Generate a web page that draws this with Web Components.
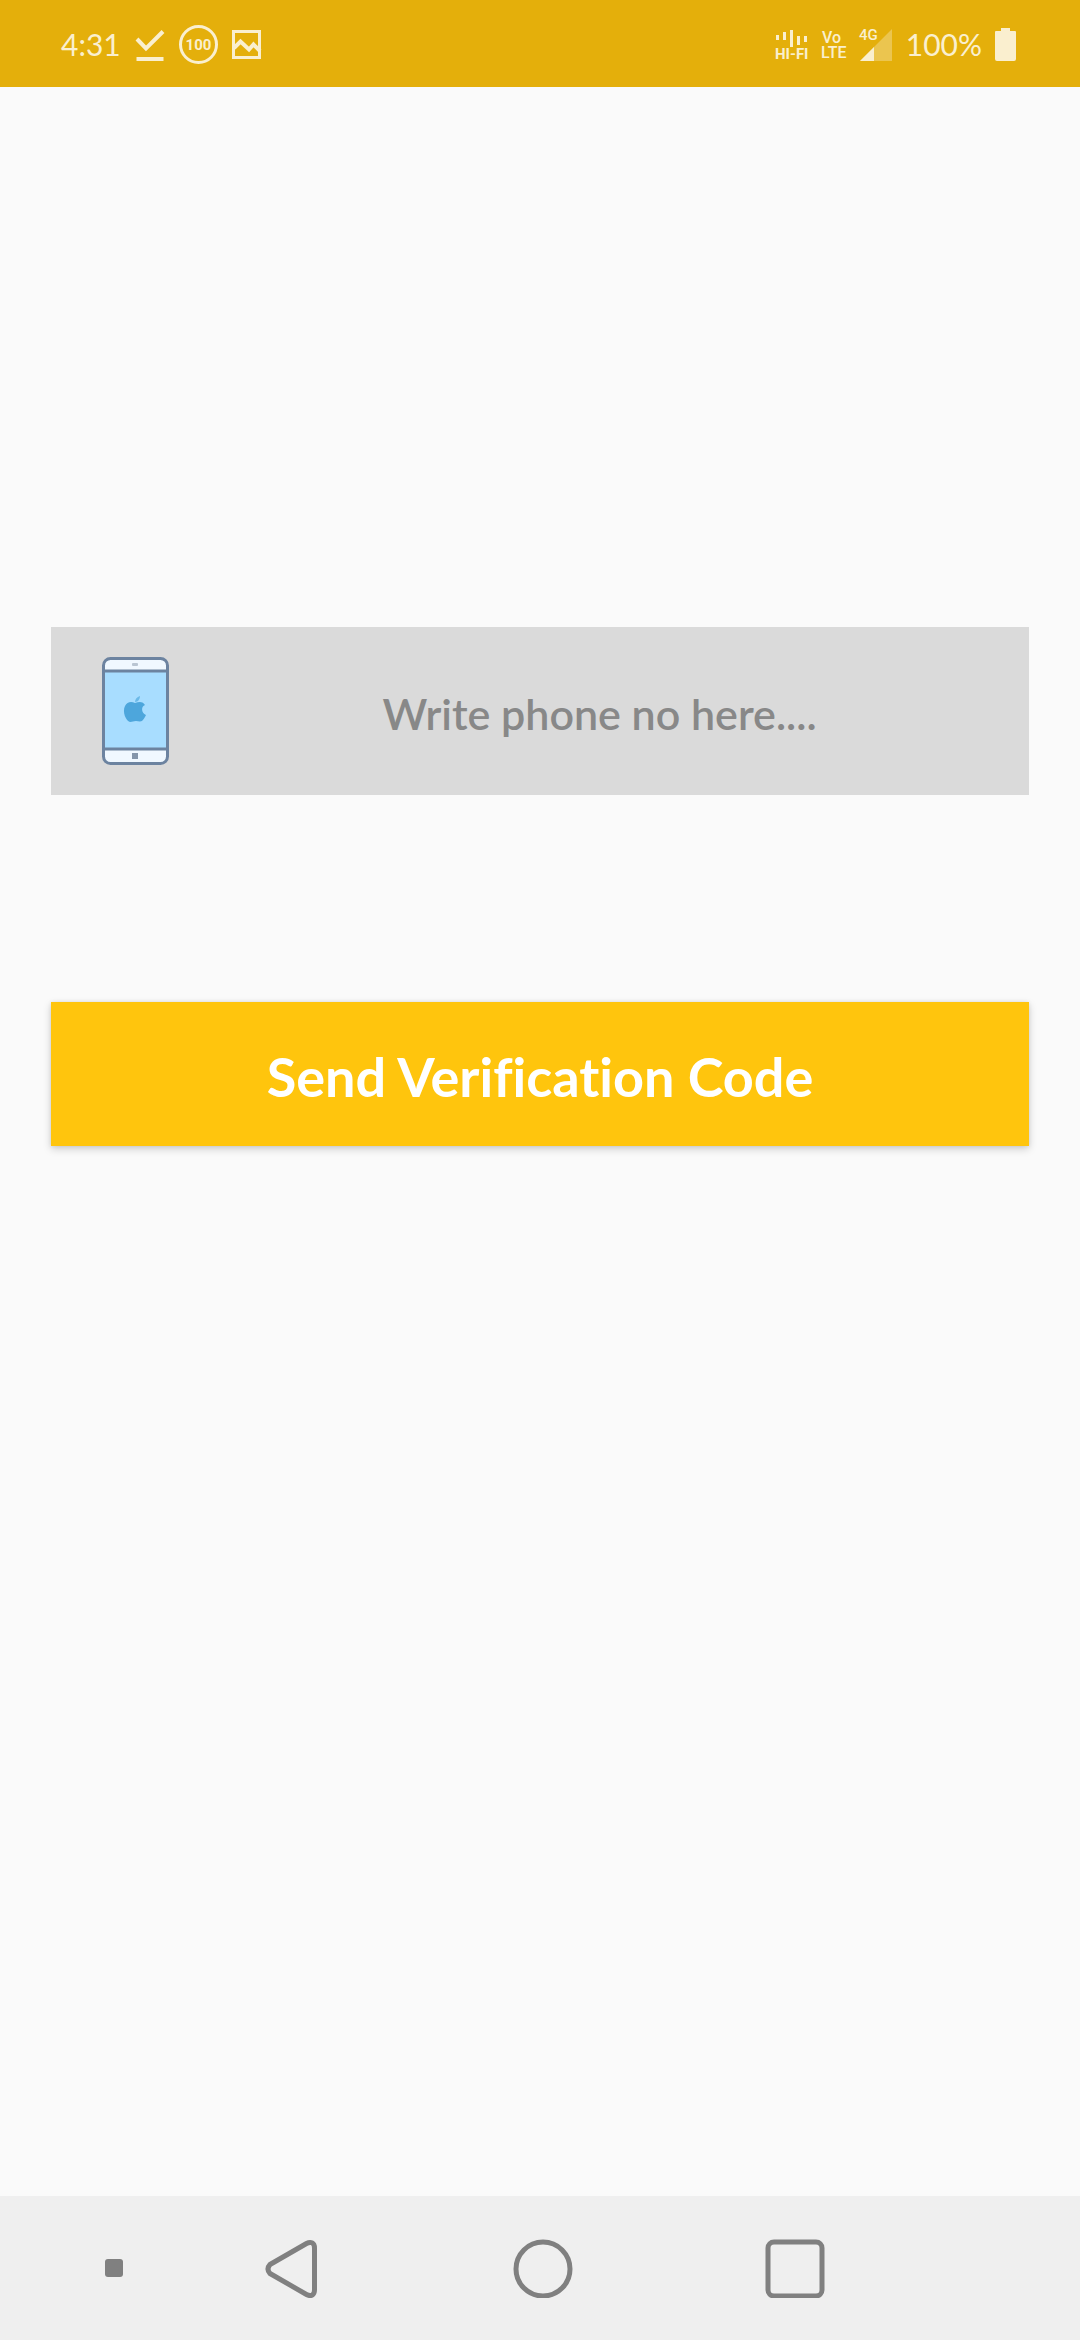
<!DOCTYPE html>
<html lang="en">
<head>
<meta charset="utf-8">
<meta name="viewport" content="width=device-width, initial-scale=1">
<title>Phone verification</title>
<style>
  html, body { margin: 0; }
  body { background: #fafafa; font-family: Lato, "Open Sans", sans-serif; }
</style>
</head>
<body>
<verify-screen>
  <status-bar slot="top" time="4:31" battery="100%"></status-bar>
  <phone-field placeholder="Write phone no here...."></phone-field>
  <action-button>Send Verification Code</action-button>
  <nav-bar slot="bottom"></nav-bar>
</verify-screen>

<script>
class BaseElement extends HTMLElement {
  connectedCallback() {
    if (!this.shadowRoot) this.attachShadow({ mode: "open" }).innerHTML = this.render();
  }
}

customElements.define("verify-screen", class extends BaseElement {
  render() {
    return `
      <style>
        :host { display: flex; flex-direction: column; min-height: 100vh; }
        main { flex: 1; display: flex; flex-direction: column; gap: 207px; padding: 540px 51px 48px; }
      </style>
      <slot name="top"></slot>
      <main><slot></slot></main>
      <slot name="bottom"></slot>`;
  }
});

customElements.define("status-bar", class extends BaseElement {
  render() {
    return `
      <style>
        :host { display: flex; justify-content: space-between; align-items: center; height: 87px;
          padding: 0 64px 0 61px; background: #e4af0b; color: #faefcf; font-size: 30px; line-height: 36px; }
        div { display: flex; align-items: center; }
        .left { gap: 14px; }
        .right { gap: 13px; }
        svg { display: block; height: 36px; fill: none; stroke: currentColor; }
        text { fill: currentColor; stroke: none; font-family: Roboto, sans-serif; font-weight: 500; }
        .bold { font-weight: 700; }
        .solid { fill: currentColor; stroke: none; }
      </style>
      <div class="left">
        <span>${this.getAttribute("time")}</span>
        <svg width="30" viewBox="0 0 30 36" aria-hidden="true">
          <path d="M2 13L11 22.500L28 5.500" stroke-width="4"/><path d="M1.500 33H28.500" stroke-width="4"/>
        </svg>
        <svg width="39" viewBox="0 0 39 36" overflow="visible">
          <circle cx="19.500" cy="18.500" r="18" stroke-width="3"/>
          <text x="19.500" y="24" text-anchor="middle" font-size="15" class="bold">100</text>
        </svg>
        <svg width="30" viewBox="0 0 30 36" aria-hidden="true">
          <rect x="1.500" y="5.500" width="26" height="26" stroke-width="3"/>
          <path d="M2 22L8.500 15.500L17 23.500L21.500 18.500L28 25" stroke-width="4"/>
        </svg>
      </div>
      <div class="right">
        <svg width="33" viewBox="0 0 33 36" overflow="visible">
          <path d="M2.500 9v5M9.500 6v8M16.500 4v17M23.500 10v9M30.500 10v6" stroke-width="3"/>
          <text x="0" y="33" font-size="15" class="bold">HI-FI</text>
        </svg>
        <svg width="25" viewBox="0 0 25 36" overflow="visible">
          <text x="1" y="17" font-size="16">Vo</text>
          <text x="0" y="32" font-size="16">LTE</text>
        </svg>
        <svg width="34" viewBox="0 0 34 36" overflow="visible">
          <path class="solid" d="M33 3V35H1Z" opacity=".35"/>
          <path class="solid" d="M15 21V35H1Z"/>
          <text x="0" y="14" font-size="15">4G</text>
        </svg>
        <span>${this.getAttribute("battery")}</span>
        <svg width="21" viewBox="0 0 21 36" aria-hidden="true">
          <path class="solid" d="M6 2H15V5H20Q21 5 21 6V33Q21 35 19 35H2Q0 35 0 33V6Q0 5 1 5H6Z"/>
        </svg>
      </div>`;
  }
});

customElements.define("phone-field", class extends BaseElement {
  render() {
    return `
      <style>
        :host { display: flex; align-items: center; height: 168px; padding: 0 19px 0 51px; background: #dadada; }
        label { flex: none; margin-right: 20px; }
        svg { display: block; }
        input { flex: 1; min-width: 0; height: 100%; box-sizing: border-box; border: 0; padding: 4px 0 0; margin: 0;
          background: none; outline: none; text-align: center; font: 600 43px Lato, sans-serif; color: #333; }
        input::placeholder { color: #888; opacity: 1; }
      </style>
      <label for="phone" aria-label="Phone number">
        <svg width="67" height="110" viewBox="0 0 67 110" fill="none">
          <rect x="1.500" y="2" width="64" height="105" rx="7" fill="#f0f8ff"/>
          <path d="M2 15H65V93H2Z" fill="#a8ddff"/>
          <path d="M2 15H65M2 93H65" stroke="#6c83a0" stroke-width="3"/>
          <rect x="1.500" y="2.500" width="64" height="105" rx="7" stroke="#6c83a0" stroke-width="3"/>
          <rect x="30" y="7" width="6" height="3" rx="1" fill="#b9c5d2"/>
          <rect x="30" y="97" width="6" height="6" fill="#8495aa"/>
          <path fill="#4da6dc" d="M33 47C29 45 25 46 23 50C20 56 24 65 28 66C31 66 31 65 34 65C36 65 38 66 40 65C42 63 43 61 44 59C39 57 39 50 43 49C40 45 37 46 33 47Z"/>
          <path fill="#6bb9e8" d="M33 46C33 43 35 41 38 40C38 43 36 46 33 46Z"/>
        </svg>
      </label>
      <input id="phone" type="tel" placeholder="${this.getAttribute("placeholder")}">`;
  }
});

customElements.define("action-button", class extends BaseElement {
  render() {
    return `
      <style>
        :host { display: block; }
        button { display: block; width: 100%; height: 144px; border: 0; border-radius: 0; padding: 4px 0 0; background: #ffc50d; color: #fff;
          font: 700 54px Lato, sans-serif; font-variant-ligatures: none; box-shadow: 0 3px 8px rgba(0,0,0,.18), 0 0 4px rgba(0,0,0,.08); }
      </style>
      <button type="button"><slot></slot></button>`;
  }
});

customElements.define("nav-bar", class extends BaseElement {
  render() {
    return `
      <style>
        :host { display: block; background: #efefef; color: #808080; }
        nav { display: grid; grid-template-columns: 63fr 102fr 252fr 252fr 252fr 159fr; height: 144px; }
        button { display: grid; place-items: center; min-width: 0; border: 0; padding: 0; background: none; color: inherit; }
        button:first-child { grid-column: 2; }
        svg { display: block; fill: none; stroke: currentColor; stroke-width: 5; stroke-linejoin: round; }
        .dot { fill: currentColor; stroke: none; }
      </style>
      <nav aria-label="System">
        <button type="button" aria-label="Hide bar"><svg width="60" height="60"><rect class="dot" x="21" y="21" width="18" height="18" rx="3"/></svg></button>
        <button type="button" aria-label="Back"><svg width="60" height="60"><path d="M45.500 5.500C50 3 53.500 5 53.500 10V52C53.500 57 50 59 45.500 56.500L9 35.500Q5 31 9 26.500Z"/></svg></button>
        <button type="button" aria-label="Home"><svg width="60" height="60"><circle cx="30" cy="31" r="27"/></svg></button>
        <button type="button" aria-label="Recent apps"><svg width="60" height="60"><rect x="3" y="4" width="54" height="54" rx="6"/></svg></button>
      </nav>`;
  }
});
</script>
</body>
</html>
